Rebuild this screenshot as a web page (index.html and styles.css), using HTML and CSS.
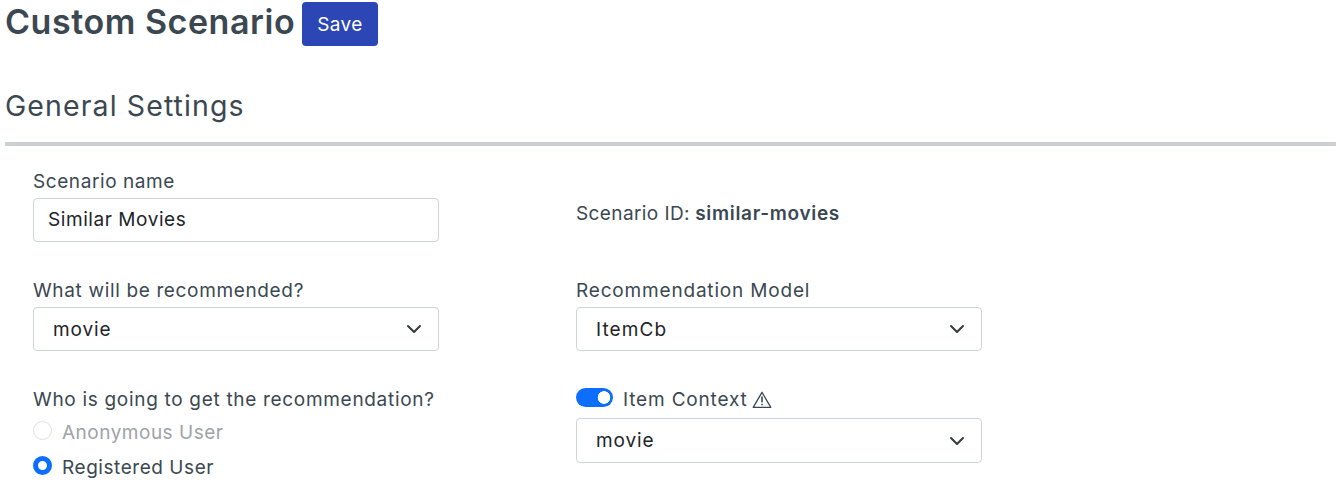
FILE: index.html
```html
<!DOCTYPE html>
<html lang="en">
<head>
<meta charset="utf-8">
<title>Custom Scenario</title>
<link rel="stylesheet" href="styles.css">
</head>
<body>
<main class="page">
  <header class="page-header">
    <h1 class="page-title">Custom Scenario</h1>
    <button class="save-button" type="button">Save</button>
  </header>
  <h2 class="section-title">General Settings</h2>
  <form class="settings">
    <div class="field">
      <label class="label label-name" for="name">Scenario name</label>
      <input class="control text-input" id="name" type="text" value="Similar Movies">
    </div>
    <p class="scenario-id"><span class="id-label">Scenario ID:</span> <strong class="id-value">similar-movies</strong></p>

    <div class="field">
      <label class="label label-what">What will be recommended?</label>
      <div class="control select"><span class="movie">movie</span><svg class="chevron" viewBox="0 0 16 16"><path d="m2 5 6 6 6-6"/></svg></div>
    </div>
    <div class="field">
      <label class="label label-model">Recommendation Model</label>
      <div class="control select"><span class="model">ItemCb</span><svg class="chevron" viewBox="0 0 16 16"><path d="m2 5 6 6 6-6"/></svg></div>
    </div>

    <div class="field">
      <span class="label label-who">Who is going to get the recommendation?</span>
      <label class="option disabled"><input class="radio" type="radio" name="user" disabled><span class="anonymous">Anonymous User</span></label>
      <label class="option"><input class="radio" type="radio" name="user" checked><span class="registered">Registered User</span></label>
    </div>
    <div class="field">
      <div class="context-row">
        <input class="switch" type="checkbox" checked>
        <span class="context">Item Context</span>
        <svg class="warning" viewBox="0 0 20 18"><path d="M10 1.3 18.8 16.3H1.2Z"/><path class="mark" d="M10 5.5V11.3M10 12.8V14.3"/></svg>
      </div>
      <div class="control select tall"><span class="movie">movie</span><svg class="chevron" viewBox="0 0 16 16"><path d="m2 5 6 6 6-6"/></svg></div>
    </div>
  </form>
</main>
</body>
</html>
```
FILE: styles.css
```css
* { box-sizing: border-box; }
body {
  margin: 0;
  background: #fff;
  color: #3b4851;
  font-family: Inter, "Open Sans", sans-serif;
  font-size: 19px;
  line-height: 28px;
  white-space: nowrap;
}
.page { padding: 2px 5px 0; }
.page-header { display: flex; gap: 8px; height: 44px; }
.page-title { margin: 0; width: 289px; font-size: 34px; line-height: 39px; font-weight: 600; letter-spacing: 0.55px; }
.save-button {
  width: 76px; height: 44px; padding: 2px 0 0; border: 0; border-radius: 4px;
  background: #2c47b5; color: #fff; font: inherit; letter-spacing: 0.35px;
}
.section-title {
  margin: 40px 0 0; height: 60px; border-bottom: 4px solid #cccfd2;
  font-size: 28.5px; line-height: 40px; font-weight: 400; letter-spacing: 1.1px;
}
.settings {
  display: grid; grid-template-columns: 406px 406px; column-gap: 137px;
  grid-template-rows: 109px 109px 110px; padding: 21px 28px 0;
}
.label { display: block; height: 31px; padding-top: 1px; }
.label-name { letter-spacing: 0.58px; }
.label-what { letter-spacing: 0.65px; }
.label-model { letter-spacing: 0.82px; }
.label-who { height: 29px; letter-spacing: 0.69px; }
.control {
  display: block; width: 100%; height: 44px; border: 1px solid #ced4da; border-radius: 4px;
  background: #fff; color: #212529; font: inherit;
}
.text-input { padding: 0 14px 1px; outline: 0; letter-spacing: 0.57px; }
.select { display: flex; align-items: center; justify-content: space-between; padding: 0 16px 0 19px; }
.movie, .model, .context, .anonymous, .registered { padding-top: 2px; }
.movie { letter-spacing: 0.9px; }
.model { letter-spacing: 1.1px; }
.tall { height: 45px; }
.tall .movie { padding-top: 1px; }
.chevron { width: 16px; height: 16px; fill: none; stroke: #343a40; stroke-width: 2; stroke-linecap: round; stroke-linejoin: round; }
.scenario-id { margin: 33px 0 0; }
.id-label { letter-spacing: 0.4px; }
.id-value { font-weight: 600; letter-spacing: 0.68px; }
.option { display: flex; align-items: center; gap: 10px; height: 35px; }
.radio {
  appearance: none; width: 19px; height: 19px; margin: 0 0 3px;
  border: 1px solid #bfbfbf; border-radius: 50%; background: #fff;
}
.radio:checked { border: 5.5px solid #0d6efd; }
.anonymous { letter-spacing: 0.5px; }
.registered { letter-spacing: 0.55px; }
.disabled { color: #9da3a8; }
.disabled .radio { border-color: #dfdfdf; }
.context-row { display: flex; align-items: center; height: 33px; padding-bottom: 5px; }
.context { letter-spacing: 0.83px; }
.switch {
  appearance: none; width: 37px; height: 19px; margin: 0 10px 3px 0; border-radius: 10px;
  background: radial-gradient(circle at 28px 9.5px, #fff 6px, #0d6efd 6.6px);
}
.warning { width: 20px; height: 18px; margin: 1px 0 0 4px; fill: none; stroke: #3b4851; stroke-width: 1.3; stroke-linejoin: round; }
.mark { stroke-width: 1.6; }
```
